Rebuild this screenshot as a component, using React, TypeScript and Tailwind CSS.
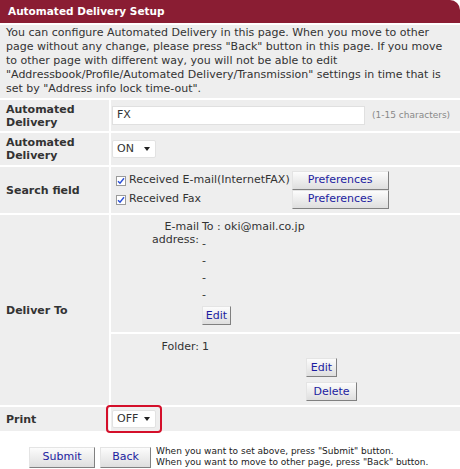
import React from "react";

const Btn = ({ label, className = "" }: { label: string; className?: string }) => (
  <div
    className={`flex items-center justify-center h-[19px] bg-gradient-to-b from-[#fcfcfc] to-[#dedede] border border-t-[#e4e4e4] border-l-[#e4e4e4] border-r-[#808080] border-b-[#808080] text-[#1c1ca0] text-[11px] ${className}`}
  >
    {label}
  </div>
);

const Select = ({ value }: { value: string }) => (
  <div className="flex items-center justify-between w-[44px] h-[18px] bg-white border border-[#e2e2e2] rounded-[2px] pl-[4px] pr-[5px] text-[11px]">
    <span>{value}</span>
    <span className="w-0 h-0 border-l-[3px] border-r-[3px] border-t-[4px] border-l-transparent border-r-transparent border-t-[#222]" />
  </div>
);

const Check = () => (
  <div className="w-[10px] h-[10px] border border-[#9a9a9a] bg-white flex items-center justify-center">
    <svg width="8" height="8" viewBox="0 0 8 8">
      <path d="M1 4.2 L3 6.3 L7 1.2" fill="none" stroke="#2a4fd6" strokeWidth="1.4" />
    </svg>
  </div>
);

const Label = ({ children }: { children: React.ReactNode }) => (
  <div className="bg-[#eeeeee] flex items-center pl-[6px] font-bold leading-[13px] text-[#333]">
    {children}
  </div>
);

export default function App() {
  return (
    <div className="w-[460px] h-[469px] bg-white font-['DejaVu_Sans',sans-serif] text-[11px] text-[#333] overflow-hidden">
      <div className="h-[23px] bg-[#8a1d33] rounded-tr-[10px] flex items-center pl-[8px] text-white font-bold text-[10.5px]">
        Automated Delivery Setup
      </div>
      <div className="mt-[2px] bg-[#eeeeee] px-[6px] pt-[1px] pb-[2px] leading-[14px]">
        You can configure Automated Delivery in this page. When you move to other page without any
        change, please press "Back" button in this page. If you move to other page with different
        way, you will not be able to edit "Addressbook/Profile/Automated Delivery/Transmission"
        settings in time that is set by "Address info lock time-out".
      </div>

      <div className="mt-[2px] grid grid-cols-[109px_1fr] gap-[2px]">
        <Label>
          Automated
          <br />
          Delivery
        </Label>
        <div className="bg-[#eeeeee] h-[31px] flex items-center pl-[1px] gap-[7px]">
          <div className="w-[253px] h-[19px] bg-white border border-[#e0e0e0] flex items-center pl-[4px]">
            FX
          </div>
          <span className="text-[9px] text-[#888]">(1-15 characters)</span>
        </div>

        <Label>
          Automated
          <br />
          Delivery
        </Label>
        <div className="bg-[#eeeeee] h-[32px] flex items-center pl-[1px]">
          <Select value="ON" />
        </div>

        <Label>Search field</Label>
        <div className="bg-[#eeeeee] h-[46px] flex items-center pl-[5px]">
          <div className="grid grid-cols-[auto_auto] items-center gap-x-[2px]">
            <div className="flex items-center gap-[3px]">
              <Check />
              <span>Received E-mail(InternetFAX)</span>
            </div>
            <Btn label="Preferences" className="w-[97px]" />
            <div className="flex items-center gap-[3px]">
              <Check />
              <span>Received Fax</span>
            </div>
            <Btn label="Preferences" className="w-[97px]" />
          </div>
        </div>

        <Label>Deliver To</Label>
        <div className="flex flex-col gap-[2px]">
          <div className="bg-[#eeeeee] h-[117px] pt-[3px] grid grid-cols-[88px_1fr] gap-x-[3px]">
            <div className="text-right leading-[13px] pt-[2px]">
              E-mail
              <br />
              address:
            </div>
            <div className="leading-[17px]">
              <div>To : oki@mail.co.jp</div>
              <div>-</div>
              <div>-</div>
              <div>-</div>
              <div>-</div>
              <Btn label="Edit" className="w-[29px] mt-[3px]" />
            </div>
          </div>
          <div className="bg-[#eeeeee] h-[71px] pt-[4px] grid grid-cols-[88px_1fr] gap-x-[3px]">
            <div className="text-right leading-[17px]">Folder:</div>
            <div className="leading-[17px]">
              <div>1</div>
              <div className="pl-[104px] pt-[3px] flex flex-col gap-[5px]">
                <Btn label="Edit" className="w-[31px]" />
                <Btn label="Delete" className="w-[51px]" />
              </div>
            </div>
          </div>
        </div>

        <Label>Print</Label>
        <div className="bg-[#eeeeee] h-[24px] flex items-center">
          <div className="-ml-[5px] border-2 border-[#d40f2a] rounded-[4px] px-[4px] py-[3px]">
            <Select value="OFF" />
          </div>
        </div>
      </div>

      <div className="mt-[15px] flex items-center pl-[29px] gap-[5px]">
        <Btn label="Submit" className="w-[66px] h-[21px]" />
        <Btn label="Back" className="w-[51px] h-[21px]" />
        <div className="text-[9px] leading-[11px] text-[#222]">
          When you want to set above, press "Submit" button.
          <br />
          When you want to move to other page, press "Back" button.
        </div>
      </div>
    </div>
  );
}
